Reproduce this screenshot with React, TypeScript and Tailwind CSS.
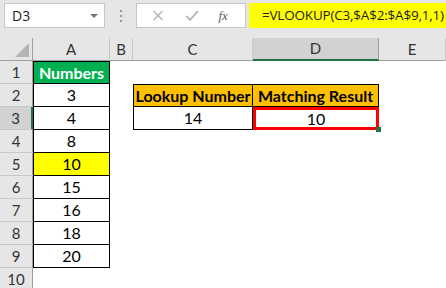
const cols = [
  { key: 'A', w: 'w-[77px]' },
  { key: 'B', w: 'w-[23px]' },
  { key: 'C', w: 'w-[120px]' },
  { key: 'D', w: 'w-[126px]' },
  { key: 'E', w: 'w-[67px]' },
];

const numbers = ['3', '4', '8', '10', '15', '16', '18', '20'];

const cellFont = { fontFamily: 'Lato, "Open Sans", sans-serif' };

function RowHeader({ n, active }: { n: number; active?: boolean }) {
  return (
    <div
      className={`flex h-[23px] w-[33px] shrink-0 items-center justify-center border-b border-[#c8c8c8] text-[15px] text-[#333] ${
        active ? 'border-r-[2px] border-r-[#217346] bg-[#d2d2d2]' : 'border-r border-r-[#9e9e9e] bg-[#e6e6e6]'
      }`}
    >
      {n}
    </div>
  );
}

function ACell({ row }: { row: number }) {
  if (row === 1) {
    return (
      <div className="flex h-[23px] w-[77px] shrink-0 items-center justify-center border border-black bg-[#00b050] text-[16px] font-bold text-white">
        Numbers
      </div>
    );
  }
  if (row > 9) return <div className="h-[23px] w-[77px] shrink-0" />;
  const v = numbers[row - 2];
  return (
    <div
      className={`flex h-[23px] w-[77px] shrink-0 items-center justify-center border-x border-b border-black text-[16px] text-black ${
        v === '10' ? 'bg-[#ffff00]' : ''
      }`}
    >
      {v}
    </div>
  );
}

function CDCells({ row }: { row: number }) {
  if (row === 2) {
    return (
      <>
        <div className="flex h-[23px] w-[120px] shrink-0 items-center justify-center border border-black bg-[#ffc000] text-[16px] font-bold text-black">
          Lookup Number
        </div>
        <div className="flex h-[23px] w-[126px] shrink-0 items-center justify-center border-y border-r border-black bg-[#ffc000] text-[16px] font-bold text-black">
          Matching Result
        </div>
      </>
    );
  }
  if (row === 3) {
    return (
      <>
        <div className="flex h-[23px] w-[120px] shrink-0 items-center justify-center border-x border-b border-black text-[16px] text-black">
          14
        </div>
        <div className="relative flex h-[23px] w-[126px] shrink-0 items-center justify-center border-[3px] border-[#ff0000] text-[16px] text-black">
          10
          <span className="absolute right-[-5px] bottom-[-5px] h-[5px] w-[5px] bg-[#217346]" />
        </div>
      </>
    );
  }
  return (
    <>
      <div className="h-[23px] w-[120px] shrink-0" />
      <div className="h-[23px] w-[126px] shrink-0" />
    </>
  );
}

export default function App() {
  return (
    <div className="h-[288px] w-[446px] overflow-hidden bg-white" style={cellFont}>
      {/* formula bar */}
      <div className="flex h-[38px] items-start bg-[#e6e6e6] pt-[3px]" style={{ fontFamily: '"Open Sans", sans-serif' }}>
        <div className="ml-[4px] flex h-[25px] w-[101px] items-center justify-between border border-[#c6c6c6] bg-white pr-[6px] pl-[7px] text-[14px] text-[#222]">
          <span>D3</span>
          <span className="h-0 w-0 border-x-[4px] border-t-[4px] border-x-transparent border-t-[#777]" />
        </div>
        <div className="flex w-[31px] flex-col items-center gap-[3px] pt-[7px]">
          <span className="h-[2px] w-[2px] bg-[#9a9a9a]" />
          <span className="h-[2px] w-[2px] bg-[#9a9a9a]" />
          <span className="h-[2px] w-[2px] bg-[#9a9a9a]" />
        </div>
        <div className="flex h-[25px] w-[110px] items-center border border-[#c6c6c6] bg-white">
          <svg width="110" height="23" viewBox="0 0 110 23">
            <path d="M17 7 L26 16 M26 7 L17 16" stroke="#b4b4b4" strokeWidth="1.4" fill="none" />
            <path d="M50 12 L54 16 L62 7" stroke="#b4b4b4" strokeWidth="1.8" fill="none" />
            <text x="83" y="16" fontFamily='"Liberation Serif", serif' fontStyle="italic" fontSize="13" fill="#555">
              fx
            </text>
          </svg>
        </div>
        <div className="ml-[3px] flex h-[25px] flex-1 items-center bg-[#ffff00] pl-[13px] text-[13.5px] tracking-[-0.2px] whitespace-nowrap text-[#222]">
          =VLOOKUP(C3,$A$2:$A$9,1,1)
        </div>
      </div>

      {/* column headers */}
      <div className="flex h-[23px]">
        <div className="relative h-[23px] w-[33px] shrink-0 border-r border-b border-[#9e9e9e] bg-[#e6e6e6]">
          <svg className="absolute top-[5px] left-[15px]" width="14" height="14" viewBox="0 0 14 14">
            <path d="M14 0 L14 14 L0 14 Z" fill="#b4b4b4" />
          </svg>
        </div>
        {cols.map((c) => (
          <div
            key={c.key}
            className={`flex h-[23px] shrink-0 items-center justify-center border-r text-[15px] text-[#333] ${c.w} ${
              c.key === 'D'
                ? 'border-r-[#9e9e9e] border-b-[2px] border-b-[#217346] bg-[#d2d2d2]'
                : 'border-r-[#c8c8c8] border-b border-b-[#9e9e9e] bg-[#e6e6e6]'
            }`}
          >
            {c.key}
          </div>
        ))}
      </div>

      {/* rows */}
      {Array.from({ length: 10 }, (_, i) => i + 1).map((row) => (
        <div key={row} className="flex h-[23px]">
          <RowHeader n={row} active={row === 3} />
          <ACell row={row} />
          <div className="h-[23px] w-[23px] shrink-0" />
          <CDCells row={row} />
          <div className="h-[23px] w-[67px] shrink-0" />
        </div>
      ))}
    </div>
  );
}
